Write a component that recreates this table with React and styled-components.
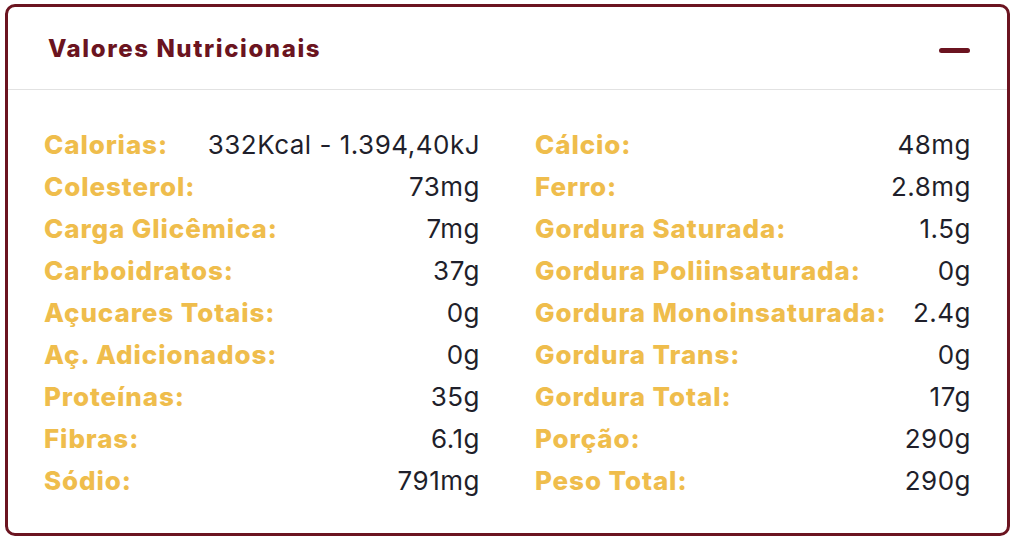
import React from 'react';
import styled, { createGlobalStyle } from 'styled-components';

const GlobalStyle = createGlobalStyle`
  html, body {
    margin: 0;
    padding: 0;
    background: #ffffff;
  }
  body {
    font-family: 'Inter', 'Noto Sans', sans-serif;
  }
`;

const Page = styled.div`
  padding: 4px 6px 7px 5px;
`;

const Card = styled.section`
  border: 3px solid #6b1420;
  border-radius: 10px;
  background: #fff;
`;

const Header = styled.header`
  display: flex;
  align-items: center;
  justify-content: space-between;
  height: 82px;
  padding: 0 37px 0 40px;
  border-bottom: 1px solid #e2e2e2;
`;

const Title = styled.h2`
  margin: 0;
  font-size: 24px;
  font-weight: 800;
  color: #6b1420;
  letter-spacing: 1.6px;
`;

const Toggle = styled.button`
  width: 31px;
  height: 5px;
  border: 0;
  padding: 0;
  border-radius: 3px;
  background: #6b1420;
  margin-top: 4px;
  cursor: pointer;
`;

const Body = styled.div`
  display: grid;
  grid-template-columns: 1fr 1fr;
  column-gap: 55px;
  padding: 33px 36px 32px 36px;
`;

const Column = styled.dl`
  margin: 0;
`;

const Row = styled.div`
  display: flex;
  justify-content: space-between;
  align-items: center;
  height: 42px;
  font-size: 26px;
`;

const Label = styled.dt`
  font-weight: 800;
  color: #efbd4c;
  letter-spacing: 0.9px;
`;

const Value = styled.dd`
  margin: 0;
  color: #1f1f2b;
  font-weight: 400;
  letter-spacing: 0.5px;
`;

const left = [
  ['Calorias:', '332Kcal - 1.394,40kJ'],
  ['Colesterol:', '73mg'],
  ['Carga Glicêmica:', '7mg'],
  ['Carboidratos:', '37g'],
  ['Açucares Totais:', '0g'],
  ['Aç. Adicionados:', '0g'],
  ['Proteínas:', '35g'],
  ['Fibras:', '6.1g'],
  ['Sódio:', '791mg'],
];

const right = [
  ['Cálcio:', '48mg'],
  ['Ferro:', '2.8mg'],
  ['Gordura Saturada:', '1.5g'],
  ['Gordura Poliinsaturada:', '0g'],
  ['Gordura Monoinsaturada:', '2.4g'],
  ['Gordura Trans:', '0g'],
  ['Gordura Total:', '17g'],
  ['Porção:', '290g'],
  ['Peso Total:', '290g'],
];

const NutrientList = ({ items }) => (
  <Column>
    {items.map(([label, value]) => (
      <Row key={label}>
        <Label>{label}</Label>
        <Value>{value}</Value>
      </Row>
    ))}
  </Column>
);

const App = () => (
  <Page>
    <GlobalStyle />
    <Card>
      <Header>
        <Title>Valores Nutricionais</Title>
        <Toggle aria-label="Recolher" />
      </Header>
      <Body>
        <NutrientList items={left} />
        <NutrientList items={right} />
      </Body>
    </Card>
  </Page>
);

export default App;
